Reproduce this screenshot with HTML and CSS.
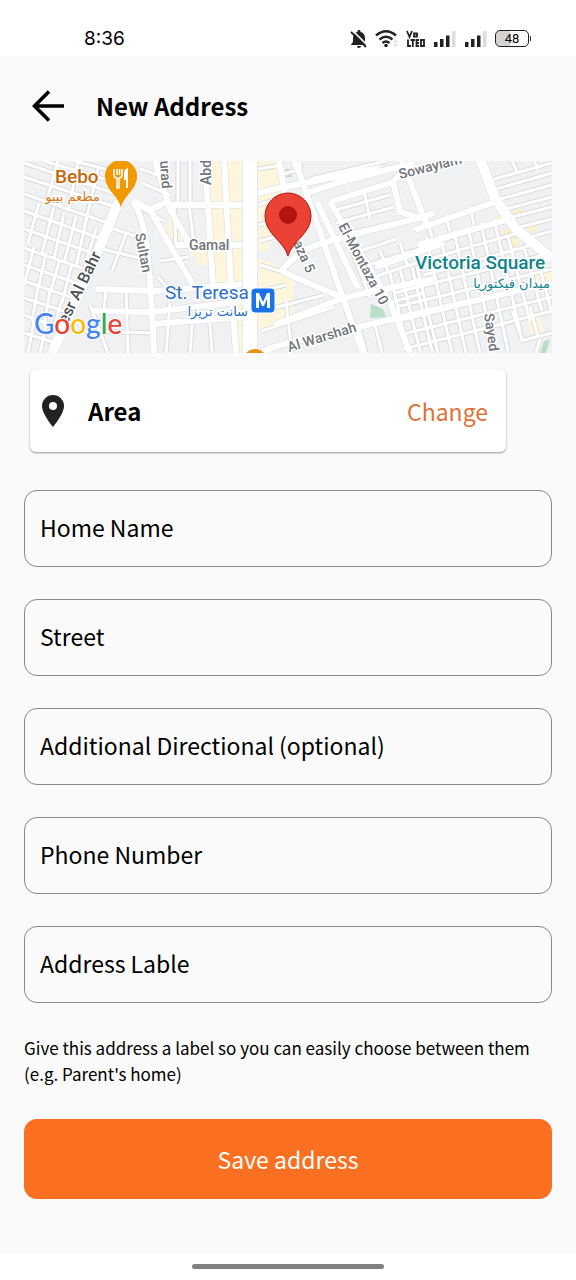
FILE: index.html
```html
<!DOCTYPE html>
<html lang="en">
<head>
<meta charset="utf-8">
<meta name="viewport" content="width=device-width, initial-scale=1">
<title>New Address</title>
<link rel="stylesheet" href="styles.css">
</head>
<body>
<div class="status">
  <span class="clock">8:36</span>
  <div class="indicators">
    <svg class="bell" width="18" height="20" viewBox="0 0 18 20" aria-hidden="true"><path d="M9 1c1 0 1.500.700 1.500 1.700C13.500 3.500 15 6 15 9v4l2 2.500V16H1v-.500L3 13V9c0-3 1.500-5.500 4.500-6.300C7.500 1.700 8 1 9 1zM7 17h4a2 2 0 0 1-4 0z" fill="#222"/><path d="M2.500 1.500l15 15" stroke="#fff" stroke-width="1.600"/><path d="M1 3l15 15" stroke="#222" stroke-width="1.800"/></svg>
    <svg class="wifi" width="24" height="20" viewBox="0 0 24 20" aria-hidden="true"><g fill="none" stroke="#222" stroke-width="2.400"><path d="M1 6.500Q11 -2 21 6.500"/><path d="M4.500 10.500Q11 5 17.500 10.500"/><path d="M7.500 14Q11 11 14.500 14"/></g><circle cx="11" cy="16.500" r="1.800" fill="#222"/><path d="M18 13.500l2.500-3 2.500 3zM18 15l2.500 3 2.500-3z" fill="#ddd"/></svg>
    <svg class="volte" width="20" height="18" viewBox="0 0 20 18" aria-hidden="true"><g fill="none" stroke="#222" stroke-width="1.800"><path d="M1 1l2.500 6L6 1M8 3.500h3v3H8zM2 9.500V16h3M4.500 10h4.500M6.800 10v7M13 10h-2.500v6H13M10.500 13H13M15 10h3v6h-3z"/></g></svg>
    <svg class="signal" width="24" height="18" viewBox="0 0 24 18" aria-hidden="true"><path d="M1 12h3.500v5H1zM7 9h3.500v8H7zM13 5.500h3.500V17H13z" fill="#222"/><path d="M19 1h3.500v16H19z" fill="#ddd"/></svg>
    <svg class="signal" width="24" height="18" viewBox="0 0 24 18" aria-hidden="true"><path d="M1 12h3.500v5H1zM7 9h3.500v8H7zM13 5.500h3.500V17H13z" fill="#222"/><path d="M19 1h3.500v16H19z" fill="#ddd"/></svg>
    <span class="battery">48</span>
  </div>
</div>

<main class="page">
  <header class="topbar">
    <button class="back" type="button" aria-label="Back"><svg width="32" height="32" viewBox="0 0 32 32" aria-hidden="true"><path d="M32 16H3M17 1.500L2.500 16 17 30.500" fill="none" stroke="#000" stroke-width="3.600"/></svg></button>
    <h1 class="title">New Address</h1>
  </header>

  <svg class="map" viewBox="0 0 528 192" role="img" aria-label="Map">
    <defs>
      <g id="left-lanes">
        <path d="M0 2L95 34M0 16L92 46M0 33L84 62M0 50L78 78M0 68L74 94M0 87L66 110M0 104L58 124M0 120L52 138M0 137L46 152M0 154L38 168M0 172L32 182M20 0L100 24M50 0L100 13M34 0L22 42M54 2L44 50M74 8L62 60M15 42L4 82M30 46L18 92M40 52L30 98M52 56L40 102M62 60L52 106M72 68L60 108M10 86L0 124M22 92L14 128M36 98L26 132M48 102L38 142M14 126L8 160M26 130L20 164M38 138L30 168M10 160L4 192M22 166L16 192"/>
        <path d="M84 66L114 76M78 88L120 98M102 73L88 110M82 128L80 148M102 128L104 192M66 144L84 192M60 170L132 172M112 44L140 60M116 8L146 18M118 22L146 34"/>
        <path d="M150 44L152 84M165 44L170 84M154 0V44M166 0V44M146 142L142 192M168 164L166 192M186 162L188 192M134 116L148 132M136 100L164 96"/>
      </g>
      <g id="right-lanes">
        <path d="M234 8L258 4M234 44L258 36M234 64L290 50M236 80L264 72M236 104L262 112M236 130L262 124M238 150L300 134M238 170L310 146M262 140L268 192M308 50L366 34M312 62L370 46M316 74L390 58M340 30L346 58M276 0V14M286 18L362 0M256 14L270 10"/>
        <path d="M324 80L346 136M336 90L372 78M344 104L396 88M350 116L398 100M356 90L364 110M376 82L384 106M366 112L384 192M376 108L396 190M388 106L408 190M322 150L330 170M362 130L396 118M364 142L400 132M334 164L342 192M350 160L358 192"/>
        <path d="M393 106L414 192M402 76L428 192M416 74L442 192M430 70L456 192M444 66L470 192M457 62L484 190M470 58L496 170M484 76L506 160M500 86L518 150M514 100L528 152M396 86L480 60M398 100L494 72M400 114L508 84M370 132L520 94M372 146L528 108M374 160L528 122M376 174L528 136M380 188L528 150M488 150L498 178M506 146L514 176M496 180L528 172M516 178L512 192"/>
        <path d="M470 18L528 2M472 28L528 12M476 38L528 24M482 48L528 36M488 56L528 46M496 66L528 58M506 76L528 70M488 0L494 12M510 0L514 8M404 62L408 76M422 54L426 70M446 46L450 64"/>
      </g>
      <g id="avenues">
        <path d="M109 40Q118 54 122 80T130 192M109 40L126 49 148 88 169 124M126 49L145 40M131 0L146 48 166 84M181 0L189 124M200 0L207 124M144 44H219M152 84H219M72 128L132 130 222 123M68 150L128 151 222 140M128 163L222 156M208 138L212 192"/>
        <path d="M270 0L276 14 319 137 339 192M256 27L356 7M234 32L256 27M283 32L316 21 390 2M293 41L334 127M306 41L366 141 386 192M306 41L369 21 376 51 396 57M256 111Q272 92 290 85T396 57L410 52M259 111L319 137 360 128 410 118M250 164L319 137M234 192L256 184 396 152 528 122M352 106L420 82M369 21L385 4M378 0L402 62M391 69L474 40M394 84L486 58M255 0L262 40"/>
      </g>
      <g id="main-roads"><path d="M95 40L68 104 28 192M456 -2L471 37 491 67 528 98"/></g>
    </defs>
    <rect width="528" height="192" fill="#eff1f3"/>
    <path d="M182 0H220V124H189zM166 84H188V104H174zM146 50L160 66V80L144 76zM234 0H256V40L244 90H234zM234 96L270 112V160L234 170zM214 140H222V190H210zM508 110L528 104V128L508 132zM500 150H514L520 172H506zM132 60L142 64 140 76 132 72z" fill="#fdf6dd"/>
    <path d="M470 52L484 60 474 66zM488 50L500 48V54H490zM502 66L514 64 510 74zM478 70L490 66 496 90H486zM506 96L520 96V104L508 106z" fill="#fdf0c8"/>
    <path d="M261 8L266 8 268 16 262 16zM347 143L359 148 362 156 346 157zM520 180L526 178 522 192H516z" fill="#b9dfc4"/>
    <g fill="none" stroke-linejoin="round">
      <g stroke="#d9dce0"><use href="#left-lanes" stroke-width="5"/><use href="#right-lanes" stroke-width="5"/><use href="#avenues" stroke-width="7"/><use href="#main-roads" stroke-width="11"/></g>
      <g stroke="#fff"><use href="#left-lanes" stroke-width="3"/><use href="#right-lanes" stroke-width="3"/><use href="#avenues" stroke-width="6"/><use href="#main-roads" stroke-width="10"/></g>
      <path d="M226 -2V194" stroke="#dcdfe3" stroke-width="15"/><path d="M226 -2V194" stroke="#fff" stroke-width="14"/>
    </g>
    <g class="street">
      <text transform="translate(43 164) rotate(-64)" class="street-main">esr Al Bahr</text>
      <text transform="translate(111 73) rotate(79)">Sultan</text>
      <text transform="translate(136 0) rotate(86)">urad</text>
      <text transform="translate(187 24) rotate(-90)">Abd</text>
      <text x="165" y="89">Gamal</text>
      <text transform="translate(269 82) rotate(66)">aza 5</text>
      <text transform="translate(314 65) rotate(62)">El-Montaza 10</text>
      <text transform="translate(265 191) rotate(-17)">Al Warshah</text>
      <text transform="translate(376 18) rotate(-14)">Sowaylam</text>
      <text transform="translate(460 153) rotate(82)">Sayed</text>
    </g>
    <g class="place">
      <text x="31" y="22" fill="#c5690c" class="strong">Bebo</text>
      <text x="76" y="40" fill="#d57a1c" class="arabic">مطعم بيبو</text>
      <text x="141" y="138" fill="#2c6fc4">St. Teresa</text>
      <text x="224" y="155" fill="#2c6fc4" class="arabic">سانت تريزا</text>
      <text x="391" y="108" fill="#11848a" class="strong">Victoria Square</text>
      <text x="526" y="127" fill="#11848a" class="arabic">ميدان فيكتوريا</text>
    </g>
    <path d="M97 47C95 35 81 29 81 15a16 16 0 0 1 32 0C113 29 99 35 97 47z" fill="#f29900"/>
    <path d="M90 8v6q0 3 3 3v10h2V17q3 0 3-3V8M93 8v6M95.500 8v6" fill="none" stroke="#fff" stroke-width="1.500"/><path d="M100 12q0-4 4-5v20h-2v-8h-2z" fill="#fff"/>
    <circle cx="231" cy="200" r="12" fill="#e8930c"/>
    <rect x="227" y="127" width="24" height="25" rx="4" fill="#1a73e8" stroke="#fff"/>
    <path d="M232 147V132h3l4 9 4-9h3v15h-3v-9l-3 7h-2l-3-7v9z" fill="#fff"/>
    <path d="M264 95C260 80 241 73 241 55a23 23 0 0 1 46 0C287 73 268 80 264 95z" fill="#ea4335" stroke="#b31412"/>
    <circle cx="264" cy="54" r="9" fill="#b31412"/>
    <text class="google" x="10" y="173"><tspan fill="#4285f4">G</tspan><tspan fill="#ea4335">o</tspan><tspan fill="#fbbc04">o</tspan><tspan fill="#4285f4">g</tspan><tspan fill="#34a853">l</tspan><tspan fill="#ea4335">e</tspan></text>
  </svg>

  <section class="area">
    <svg width="24" height="32" viewBox="0 0 24 32" aria-hidden="true"><path fill-rule="evenodd" d="M12 0A11 11 0 0 0 1 11c0 8 11 21 11 21s11-13 11-21A11 11 0 0 0 12 0zm0 7a4 4 0 1 1 0 8 4 4 0 0 1 0-8z" fill="#222"/></svg>
    <h2 class="area-name">Area</h2>
    <button class="change" type="button">Change</button>
  </section>

  <form class="form">
    <input class="field" type="text" aria-label="Home Name" placeholder="Home Name">
    <input class="field" type="text" aria-label="Street" placeholder="Street">
    <input class="field" type="text" aria-label="Additional Directional (optional)" placeholder="Additional Directional (optional)">
    <input class="field" type="tel" aria-label="Phone Number" placeholder="Phone Number">
    <input class="field" type="text" aria-label="Address Lable" placeholder="Address Lable">
    <p class="hint">Give this address a label so you can easily choose between them (e.g. Parent's home)</p>
    <button class="save" type="submit">Save address</button>
  </form>
</main>
<div class="navbar"><div class="pill"></div></div>
</body>
</html>
```
FILE: styles.css
```css
* { box-sizing: border-box; }
body {
  margin: 0;
  min-height: 100vh;
  display: flex;
  flex-direction: column;
  background: #fafafa;
  color: #000;
  font-family: "Noto Sans CJK SC", "Noto Sans", sans-serif;
  font-size: 23px;
}
button, input { font: inherit; color: inherit; }
button { border: 0; padding: 0; background: none; cursor: pointer; }

.status {
  display: flex;
  justify-content: space-between;
  align-items: center;
  height: 57px;
  padding: 20px 47px 0 84px;
  background: #fff;
}
.clock { font: 19px/36px Inter, sans-serif; }
.indicators { display: flex; align-items: center; gap: 7px; }
.battery {
  position: relative;
  width: 34px;
  height: 17px;
  border: 1px solid #222;
  border-radius: 5px;
  background: linear-gradient(90deg, #d4d4d4 45%, #fff 45%);
  font: 13px/15px Roboto, sans-serif;
  text-align: center;
}
.battery::after {
  content: "";
  position: absolute;
  right: -3px;
  top: 5px;
  width: 1px;
  height: 5px;
  background: #333;
}

.page { flex: 1; padding: 0 24px; }
.topbar {
  display: flex;
  align-items: center;
  gap: 32px;
  height: 104px;
  padding: 0 8px 7px;
}
.back { display: flex; }
.title { margin: 0; font-size: 24px; font-weight: 700; line-height: 36px; }

.map { display: block; width: 100%; height: auto; overflow: hidden; }
.street { font: 500 14px Roboto, sans-serif; fill: #70757a; stroke: #fff; stroke-width: 3px; paint-order: stroke; }
.street-main { font-size: 16px; fill: #4d5156; }
.place { font: 19px Roboto, sans-serif; stroke: #fff; stroke-width: 3px; paint-order: stroke; }
.strong { font-weight: 500; }
.arabic { font: 13px "DejaVu Sans", sans-serif; direction: rtl; }
.google { font: 500 28px Lato, sans-serif; stroke: #fff; stroke-width: 2px; paint-order: stroke; }

.area {
  display: flex;
  align-items: center;
  height: 83px;
  margin: 16px 46px 0 6px;
  padding: 0 18px 0 11px;
  border-radius: 6px;
  background: #fff;
  box-shadow: 0 1px 2px rgba(0, 0, 0, .4);
}
.area-name { flex: 1; margin: 0 0 0 23px; font-size: 24px; font-weight: 700; line-height: 36px; }
.change { color: #e07238; line-height: 36px; }

.form { display: flex; flex-direction: column; gap: 32px; margin-top: 38px; }
.field {
  width: 100%;
  height: 77px;
  padding: 0 15px 3px;
  border: 1px solid #888;
  border-radius: 13px;
  background: transparent;
}
.field::placeholder { color: #000; opacity: 1; }
.hint { margin: 0; font-size: 17px; line-height: 26px; }
.save { height: 80px; margin-bottom: 55px; border-radius: 13px; background: #fb6f20; color: #fff; }

.navbar { display: flex; justify-content: center; height: 26px; padding-top: 10px; background: #fff; }
.pill { width: 192px; height: 5px; border-radius: 3px; background: #808080; }
```
